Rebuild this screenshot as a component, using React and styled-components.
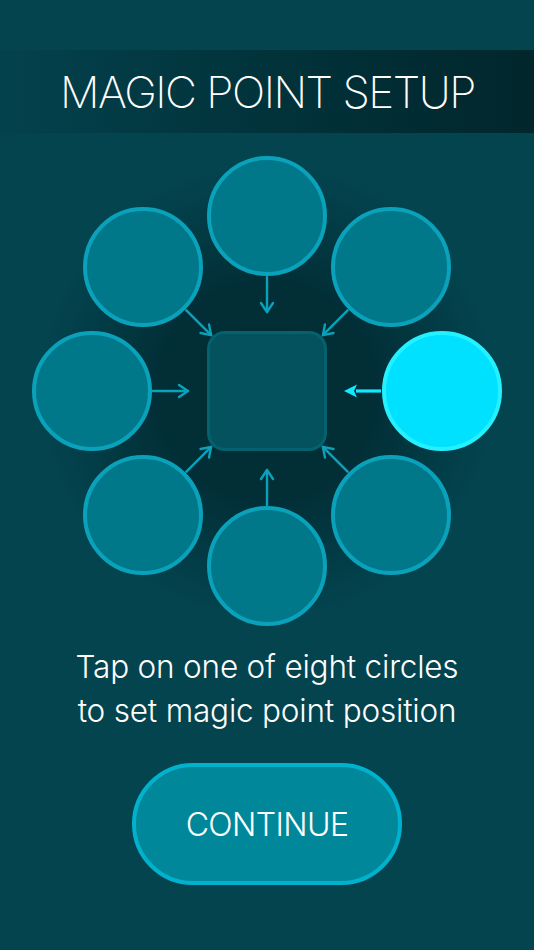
import React, { useState } from "react";
import styled, { createGlobalStyle } from "styled-components";

const Global = createGlobalStyle`
  html, body { margin: 0; padding: 0; background: #03444f; }
  body { font-family: "Inter", "Liberation Sans", sans-serif; -webkit-font-smoothing: antialiased; }
`;

const Page = styled.div`
  width: 534px;
  height: 950px;
  background: #03444f;
  display: flex;
  flex-direction: column;
  align-items: center;
  overflow: hidden;
`;

const Header = styled.div`
  margin-top: 50px;
  width: 100%;
  height: 83px;
  background: linear-gradient(90deg, #03424d 0%, #023740 35%, #012c33 75%, #01272d 100%);
  display: flex;
  align-items: center;
  justify-content: center;
`;

const Title = styled.h1`
  margin: 0;
  color: #ffffff;
  font-family: "Inter", "Liberation Sans", sans-serif;
  font-weight: 200;
  font-size: 44px;
  letter-spacing: -1.5px;
  line-height: 1;
  padding-left: 1px;
`;

const Diagram = styled.div`
  position: relative;
  margin-top: 8px;
  width: 534px;
  height: 500px;
  background: radial-gradient(circle at 50% 50%, #012b32 0%, #022f37 30%, #03444f 62%);
`;

const Arrows = styled.svg`
  position: absolute;
  left: 0;
  top: 0;
  pointer-events: none;
`;

const Circle = styled.button`
  position: absolute;
  width: 120px;
  height: 120px;
  margin: -60px 0 0 -60px;
  border-radius: 50%;
  box-sizing: border-box;
  padding: 0;
  cursor: pointer;
  border: 4px solid ${(p) => (p.$active ? "#24f1ff" : "#0aa2bb")};
  background: ${(p) => (p.$active ? "#00e0ff" : "#00788a")};
  outline: none;
`;

const Center = styled.div`
  position: absolute;
  left: 207px;
  top: 190px;
  width: 120px;
  height: 120px;
  box-sizing: border-box;
  border-radius: 18px;
  border: 3px solid #04616d;
  background: #03525e;
`;

const Hint = styled.p`
  margin: 4px 0 0;
  color: #ffffff;
  font-family: "Inter", "Liberation Sans", sans-serif;
  font-weight: 300;
  font-size: 31.5px;
  line-height: 44px;
  text-align: center;
  letter-spacing: -0.2px;
`;

const ContinueButton = styled.button`
  margin-top: 30px;
  width: 270px;
  height: 122px;
  box-sizing: border-box;
  border-radius: 61px;
  border: 4px solid #00b2ce;
  background: #00889a;
  color: #ffffff;
  font-family: "Inter", "Liberation Sans", sans-serif;
  font-weight: 300;
  font-size: 32px;
  letter-spacing: -0.6px;
  cursor: pointer;
`;

const CX = 267;
const CY = 250;
const R = 175;
const angles = [-90, -45, 0, 45, 90, 135, 180, 225];

function Arrow({ angle, active }) {
  const a = (angle * Math.PI) / 180;
  const ux = Math.cos(a);
  const uy = Math.sin(a);
  const sx = CX + ux * 114;
  const sy = CY + uy * 114;
  const tip = active ? 77 : 79;
  const tx = CX + ux * tip;
  const ty = CY + uy * tip;
  const px = -uy;
  const py = ux;
  if (active) {
    const hl = 13;
    const hw = 6.5;
    const bx = tx + ux * hl;
    const by = ty + uy * hl;
    return (
      <g>
        <line x1={sx} y1={sy} x2={bx - ux * 1} y2={by - uy * 1} stroke="#12e8ff" strokeWidth="3.2" />
        <polygon
          points={`${tx},${ty} ${bx + px * hw},${by + py * hw} ${bx - ux * 3},${by - uy * 3} ${bx - px * hw},${by - py * hw}`}
          fill="#12e8ff"
        />
      </g>
    );
  }
  const hl = 9;
  const hw = 6;
  const bx = tx + ux * hl;
  const by = ty + uy * hl;
  return (
    <g stroke="#0aa2bb" strokeWidth="2.4" fill="none" strokeLinecap="round" strokeLinejoin="round">
      <line x1={sx} y1={sy} x2={tx} y2={ty} />
      <polyline points={`${bx + px * hw},${by + py * hw} ${tx},${ty} ${bx - px * hw},${by - py * hw}`} />
    </g>
  );
}

export default function App() {
  const [selected, setSelected] = useState(2);
  return (
    <>
      <Global />
      <Page>
        <Header>
          <Title>MAGIC POINT SETUP</Title>
        </Header>
        <Diagram>
          <Arrows width="534" height="500" viewBox="0 0 534 500">
            {angles.map((ang, i) => (
              <Arrow key={ang} angle={ang} active={i === selected} />
            ))}
          </Arrows>
          <Center />
          {angles.map((ang, i) => {
            const a = (ang * Math.PI) / 180;
            const x = CX + Math.cos(a) * R;
            const y = CY + Math.sin(a) * R;
            return (
              <Circle
                key={ang}
                $active={i === selected}
                style={{ left: `${x}px`, top: `${y}px` }}
                aria-label={`position ${i + 1}`}
                onClick={() => setSelected(i)}
              />
            );
          })}
        </Diagram>
        <Hint>
          Tap on one of eight circles
          <br />
          to set magic point position
        </Hint>
        <ContinueButton>CONTINUE</ContinueButton>
      </Page>
    </>
  );
}
